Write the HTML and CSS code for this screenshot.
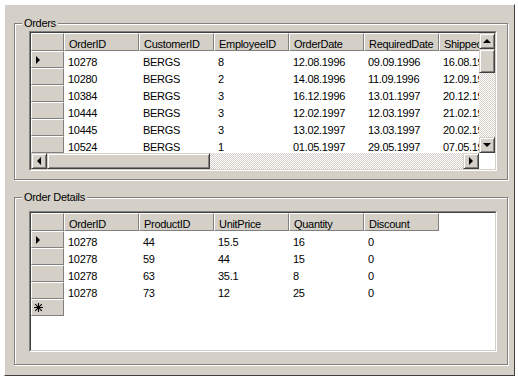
FILE: index.html
```html
<!DOCTYPE html>
<html lang="en">
<head>
    <meta charset="UTF-8">
    <title>Orders - Master/Detail</title>
    <link rel="stylesheet" href="styles.css">
</head>
<body>

<div class="window">

    <!-- Orders (master) -->
    <div class="group group-orders">
        <span class="group-label">Orders</span>
        <div class="grid">
            <div class="grid-inner grid-scroll">
                <div class="grid-view">
                    <div class="grid-row grid-head">
                        <div class="row-head"></div>
                        <div class="col-head">OrderID</div>
                        <div class="col-head">CustomerID</div>
                        <div class="col-head">EmployeeID</div>
                        <div class="col-head">OrderDate</div>
                        <div class="col-head">RequiredDate</div>
                        <div class="col-head">ShippedDate</div>
                    </div>
                    <div class="grid-row">
                        <div class="row-head"><span class="current"></span></div>
                        <div class="cell">10278</div>
                        <div class="cell">BERGS</div>
                        <div class="cell">8</div>
                        <div class="cell">12.08.1996</div>
                        <div class="cell">09.09.1996</div>
                        <div class="cell">16.08.1996</div>
                    </div>
                    <div class="grid-row">
                        <div class="row-head"></div>
                        <div class="cell">10280</div>
                        <div class="cell">BERGS</div>
                        <div class="cell">2</div>
                        <div class="cell">14.08.1996</div>
                        <div class="cell">11.09.1996</div>
                        <div class="cell">12.09.1996</div>
                    </div>
                    <div class="grid-row">
                        <div class="row-head"></div>
                        <div class="cell">10384</div>
                        <div class="cell">BERGS</div>
                        <div class="cell">3</div>
                        <div class="cell">16.12.1996</div>
                        <div class="cell">13.01.1997</div>
                        <div class="cell">20.12.1996</div>
                    </div>
                    <div class="grid-row">
                        <div class="row-head"></div>
                        <div class="cell">10444</div>
                        <div class="cell">BERGS</div>
                        <div class="cell">3</div>
                        <div class="cell">12.02.1997</div>
                        <div class="cell">12.03.1997</div>
                        <div class="cell">21.02.1997</div>
                    </div>
                    <div class="grid-row">
                        <div class="row-head"></div>
                        <div class="cell">10445</div>
                        <div class="cell">BERGS</div>
                        <div class="cell">3</div>
                        <div class="cell">13.02.1997</div>
                        <div class="cell">13.03.1997</div>
                        <div class="cell">20.02.1997</div>
                    </div>
                    <div class="grid-row">
                        <div class="row-head"></div>
                        <div class="cell">10524</div>
                        <div class="cell">BERGS</div>
                        <div class="cell">1</div>
                        <div class="cell">01.05.1997</div>
                        <div class="cell">29.05.1997</div>
                        <div class="cell">07.05.1997</div>
                    </div>
                </div>

                <div class="vscroll">
                    <div class="sb-btn"><span class="arrow arrow-up"></span></div>
                    <div class="sb-btn vthumb"></div>
                    <div class="track"></div>
                    <div class="sb-btn"><span class="arrow arrow-down"></span></div>
                </div>

                <div class="hscroll">
                    <div class="sb-btn"><span class="arrow arrow-left"></span></div>
                    <div class="sb-btn hthumb"></div>
                    <div class="track"></div>
                    <div class="sb-btn"><span class="arrow arrow-right"></span></div>
                </div>

                <div class="corner"></div>
            </div>
        </div>
    </div>

    <!-- Order Details (detail) -->
    <div class="group group-details">
        <span class="group-label">Order Details</span>
        <div class="grid">
            <div class="grid-inner grid-plain">
                <div class="grid-row grid-head">
                    <div class="row-head"></div>
                    <div class="col-head">OrderID</div>
                    <div class="col-head">ProductID</div>
                    <div class="col-head">UnitPrice</div>
                    <div class="col-head">Quantity</div>
                    <div class="col-head">Discount</div>
                </div>
                <div class="grid-row">
                    <div class="row-head"><span class="current"></span></div>
                    <div class="cell">10278</div>
                    <div class="cell">44</div>
                    <div class="cell">15.5</div>
                    <div class="cell">16</div>
                    <div class="cell">0</div>
                </div>
                <div class="grid-row">
                    <div class="row-head"></div>
                    <div class="cell">10278</div>
                    <div class="cell">59</div>
                    <div class="cell">44</div>
                    <div class="cell">15</div>
                    <div class="cell">0</div>
                </div>
                <div class="grid-row">
                    <div class="row-head"></div>
                    <div class="cell">10278</div>
                    <div class="cell">63</div>
                    <div class="cell">35.1</div>
                    <div class="cell">8</div>
                    <div class="cell">0</div>
                </div>
                <div class="grid-row">
                    <div class="row-head"></div>
                    <div class="cell">10278</div>
                    <div class="cell">73</div>
                    <div class="cell">12</div>
                    <div class="cell">25</div>
                    <div class="cell">0</div>
                </div>
                <div class="grid-row">
                    <div class="row-head">
                        <svg class="new-row" width="9" height="9" viewBox="0 0 9 9">
                            <path d="M4.5 0V9M0 4.5H9M1.2 1.2L7.8 7.8M7.8 1.2L1.2 7.8" stroke="#000" stroke-width="1.1" fill="none"/>
                        </svg>
                    </div>
                </div>
            </div>
        </div>
    </div>

</div>

</body>
</html>
```

FILE: styles.css
```css
body {
    margin: 0;
    background: #fff;
    font-family: "Liberation Sans", Arial, sans-serif;
    font-size: 11px;
    letter-spacing: -0.3px;
    color: #000;
}
.window {
    margin: 4px 0 0 4px;
    width: 511px;
    height: 372px;
    box-sizing: border-box;
    padding: 18px 6px 10px 9px;
    background: #d4d0c8;
    border: 1px solid;
    border-color: #fff #404040 #404040 #fff;
}

/* group boxes */
.group {
    position: relative;
    border: 1px solid #808080;
    box-shadow: inset 1px 1px 0 #fff, 1px 1px 0 #fff;
}
.group-orders {
    padding: 7px 10px 8px 14px;
}
.group-details {
    margin-top: 17px;
    padding: 13px 10px 12px 14px;
}
.group-label {
    position: absolute;
    top: -7px;
    left: 7px;
    padding: 0 2px;
    line-height: 13px;
    background: #d4d0c8;
}

/* data grids */
.grid {
    border: 1px solid;
    border-color: #808080 #fff #fff #808080;
}
.grid-inner {
    border: 1px solid;
    border-color: #404040 #d4d0c8 #d4d0c8 #404040;
    background: #fff;
}
.grid-scroll {
    height: 136px;
    display: grid;
    grid-template-columns: 1fr 16px;
    grid-template-rows: 1fr 16px;
}
.grid-plain {
    height: 137px;
}
.grid-view {
    overflow: hidden;
}
.grid-row {
    display: flex;
}
.row-head {
    flex: none;
    width: 33px;
    height: 17px;
    box-sizing: border-box;
    padding-left: 4px;
    display: flex;
    align-items: center;
    background: #d4d0c8;
    border: 1px solid;
    border-color: #fff #808080 #808080 #fff;
}
.grid-head .row-head {
    height: 18px;
}
.col-head {
    flex: none;
    width: 75px;
    height: 18px;
    box-sizing: border-box;
    padding: 3px 0 0 4px;
    line-height: 14px;
    white-space: nowrap;
    overflow: hidden;
    background: #d4d0c8;
    border: 1px solid;
    border-color: #fff #808080 #808080 #fff;
}
.cell {
    flex: none;
    width: 75px;
    height: 17px;
    box-sizing: border-box;
    padding: 4px 0 0 4px;
    line-height: 14px;
    white-space: nowrap;
}
.current {
    width: 0;
    height: 0;
    border-left: 4px solid #000;
    border-top: 4px solid transparent;
    border-bottom: 4px solid transparent;
}
.new-row {
    margin-left: -2px;
}

/* scroll bars */
.vscroll {
    display: flex;
    flex-direction: column;
}
.hscroll {
    display: flex;
}
.sb-btn {
    flex: none;
    width: 16px;
    height: 16px;
    box-sizing: border-box;
    display: flex;
    align-items: center;
    justify-content: center;
    background: #d4d0c8;
    border: 1px solid;
    border-color: #d4d0c8 #404040 #404040 #d4d0c8;
    box-shadow: inset 1px 1px 0 #fff, inset -1px -1px 0 #808080;
}
.vthumb {
    height: 24px;
}
.hthumb {
    width: 163px;
}
.track {
    flex: 1;
    background: repeating-conic-gradient(#fff 0 25%, #d4d0c8 0 50%) 0 0 / 2px 2px;
}
.corner {
    background: #fff;
}
.arrow {
    width: 0;
    height: 0;
}
.arrow-up {
    border-left: 4px solid transparent;
    border-right: 4px solid transparent;
    border-bottom: 4px solid #000;
}
.arrow-down {
    border-left: 4px solid transparent;
    border-right: 4px solid transparent;
    border-top: 4px solid #000;
}
.arrow-left {
    border-top: 4px solid transparent;
    border-bottom: 4px solid transparent;
    border-right: 4px solid #000;
}
.arrow-right {
    border-top: 4px solid transparent;
    border-bottom: 4px solid transparent;
    border-left: 4px solid #000;
}
```
